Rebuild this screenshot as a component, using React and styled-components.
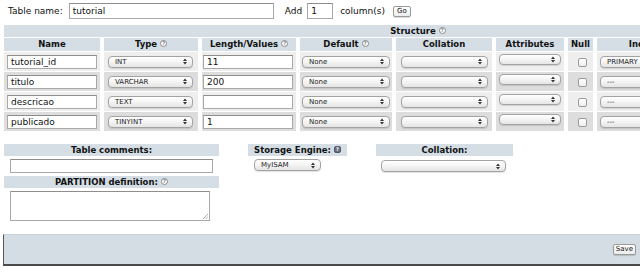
import React from "react";
import styled, { createGlobalStyle } from "styled-components";

const Global = createGlobalStyle`
  html, body { margin: 0; padding: 0; overflow: hidden; background: #fff; }
  body { font-family: "DejaVu Sans", Verdana, sans-serif; color: #111; width: 640px; }
`;

const Page = styled.div`
  width: 640px;
  height: 279px;
  overflow: hidden;
  position: relative;
`;

const TopBar = styled.div`
  display: flex;
  align-items: center;
  height: 24px;
  padding: 0 0 0 8px;
  font-size: 9px;
  box-sizing: border-box;
  padding-bottom: 2px;
`;

const Label = styled.span`
  margin-right: ${p => p.$mr || 0}px;
  margin-left: ${p => p.$ml || 0}px;
  white-space: nowrap;
`;

const TextInput = styled.div`
  width: ${p => p.$w}px;
  height: ${p => p.$h || 14}px;
  box-sizing: border-box;
  border: 1px solid #a9a9a9;
  border-top-color: #8e8e8e;
  background: #fff;
  font-size: 9px;
  line-height: ${p => (p.$h || 14) - 2}px;
  padding-left: 3px;
  margin-left: ${p => p.$ml || 0}px;
  white-space: nowrap;
  overflow: hidden;
`;

const Button = styled.div`
  height: ${p => p.$h || 11}px;
  padding: 0 ${p => p.$px || 3}px;
  box-sizing: border-box;
  border: 1px solid #9a9a9a;
  border-radius: 2px;
  background: linear-gradient(#ffffff, #ececec);
  font-size: 7px;
  line-height: ${p => (p.$h || 11) - 2}px;
  margin-left: ${p => p.$ml || 0}px;
  box-shadow: 0 1px 1px rgba(0,0,0,0.15);
`;

const Table = styled.table`
  border-collapse: separate;
  border-spacing: 4px 1px;
  table-layout: fixed;
  width: max-content;
  margin-left: 0;
`;

const Band = styled.th`
  background: #d5dee5;
  height: 12px;
  padding: 0;
  font-size: 8.5px;
  font-weight: bold;
  text-align: center;
  line-height: 12px;
`;

const HeadCell = styled.th`
  background: #d5dee5;
  width: ${p => p.$w}px;
  height: 13px;
  padding: 0;
  font-size: 8.5px;
  font-weight: bold;
  text-align: center;
  white-space: nowrap;
  overflow: hidden;
  line-height: 13px;
`;

const Row = styled.tr`
  background: ${p => (p.$alt ? "#dddddd" : "#eeeeee")};
`;

const Cell = styled.td`
  height: 19px;
  padding: 0 0 0 ${p => p.$pl || 3}px;
  vertical-align: middle;
  background: inherit;
  text-align: ${p => (p.$center ? "center" : "left")};
`;

const SelectBox = styled.div`
  display: flex;
  align-items: center;
  justify-content: space-between;
  width: ${p => p.$w}px;
  height: ${p => p.$h || 12}px;
  box-sizing: border-box;
  border: 1px solid #a3a3a3;
  border-radius: 4px;
  background: linear-gradient(#ffffff 0%, #f4f4f4 50%, #e4e4e4 100%);
  box-shadow: 0 1px 1px rgba(0,0,0,0.12);
  padding: 0 5px 0 6px;
  font-size: 7px;
  color: #222;
  margin-left: ${p => p.$ml || 0}px;
  margin-top: ${p => p.$mt || 0}px;
  white-space: nowrap;
  overflow: hidden;
`;

const Check = styled.span`
  display: inline-block;
  width: 9px;
  height: 9px;
  box-sizing: border-box;
  border: 1px solid #9b9b9b;
  border-radius: 2px;
  background: linear-gradient(#fff, #eee);
  vertical-align: middle;
`;

const Help = styled.span`
  display: inline-block;
  width: 7px;
  height: 7px;
  box-sizing: border-box;
  border-radius: ${p => (p.$dark ? "2px" : "50%")};
  border: 1px solid ${p => (p.$dark ? "#556" : "#888")};
  background: ${p => (p.$dark ? "#6a6f80" : "#fff")};
  color: ${p => (p.$dark ? "#fff" : "#777")};
  font-size: 5px;
  line-height: 5px;
  text-align: center;
  font-weight: bold;
  vertical-align: middle;
  margin-left: 3px;
  position: relative;
  top: -1px;
`;

const Bottom = styled.div`
  display: flex;
  align-items: flex-start;
  margin-top: 12px;
  padding-left: 4px;
`;

const Group = styled.div`
  display: flex;
  flex-direction: column;
  width: ${p => p.$w}px;
  margin-right: ${p => p.$mr || 0}px;
`;

const GroupHead = styled.div`
  background: #d5dee5;
  height: 12px;
  line-height: 12px;
  font-size: 8.5px;
  font-weight: bold;
  text-align: center;
  white-space: nowrap;
  margin-top: ${p => p.$mt || 0}px;
`;

const TextArea = styled.div`
  width: 200px;
  height: 30px;
  box-sizing: border-box;
  border: 1px solid #a9a9a9;
  border-top-color: #8e8e8e;
  margin: 3px 0 0 6px;
  position: relative;
  background: #fff;
`;

const Grip = styled.svg`
  position: absolute;
  right: 1px;
  bottom: 1px;
`;

const Footer = styled.div`
  margin: 13px 0 0 3px;
  height: 32px;
  box-sizing: border-box;
  background: #d3dde3;
  border-left: 1px solid #555;
  border-bottom: 2px solid #4a4a4a;
  border-top: 1px solid #c9d2d8;
  display: flex;
  align-items: center;
  justify-content: flex-end;
  padding-right: 4px;
`;

const Arrows = () => (
  <svg width="4" height="7" viewBox="0 0 4 7">
    <path d="M0 3 L2 0.5 L4 3 Z M0 4 L2 6.5 L4 4 Z" fill="#333" />
  </svg>
);

const Sel = ({ w, h, text, ml, mt }) => (
  <SelectBox $w={w} $h={h} $ml={ml} $mt={mt}>
    <span>{text}</span>
    <Arrows />
  </SelectBox>
);

const rows = [
  { name: "tutorial_id", type: "INT", len: "11", idx: "PRIMARY" },
  { name: "titulo", type: "VARCHAR", len: "200", idx: "---" },
  { name: "descricao", type: "TEXT", len: "", idx: "---" },
  { name: "publicado", type: "TINYINT", len: "1", idx: "---" },
];

export default function App() {
  return (
    <Page>
      <Global />
      <TopBar>
        <Label $mr={6}>Table name:</Label>
        <TextInput $w={205} $h={16}>tutorial</TextInput>
        <Label $ml={11} $mr={5}>Add</Label>
        <TextInput $w={26} $h={16}>1</TextInput>
        <Label $ml={7}>column(s)</Label>
        <Button $ml={8} $px={3}>Go</Button>
      </TopBar>
      <Table>
        <thead>
          <tr>
            <Band colSpan={11}>
              Structure<Help>?</Help>
            </Band>
          </tr>
          <tr>
            <HeadCell $w={96}>Name</HeadCell>
            <HeadCell $w={94}>Type<Help>?</Help></HeadCell>
            <HeadCell $w={94}>Length/Values<Help>?</Help></HeadCell>
            <HeadCell $w={92}>Default<Help>?</Help></HeadCell>
            <HeadCell $w={96}>Collation</HeadCell>
            <HeadCell $w={68}>Attributes</HeadCell>
            <HeadCell $w={25}>Null</HeadCell>
            <HeadCell $w={90}>Index</HeadCell>
            <HeadCell $w={30}>A_I</HeadCell>
            <HeadCell $w={100}>Comments</HeadCell>
            <HeadCell $w={1}></HeadCell>
          </tr>
        </thead>
        <tbody>
          {rows.map((r, i) => (
            <Row key={r.name} $alt={i % 2 === 1}>
              <Cell><TextInput $w={90}>{r.name}</TextInput></Cell>
              <Cell $pl={4}><Sel w={85} text={r.type} /></Cell>
              <Cell $pl={1}><TextInput $w={90}>{r.len}</TextInput></Cell>
              <Cell $pl={2}><Sel w={88} text="None" /></Cell>
              <Cell $pl={5}><Sel w={87} text="" /></Cell>
              <Cell $pl={3}><Sel w={62} h={11} mt={-4} text="" /></Cell>
              <Cell $center $pl={0}><Check /></Cell>
              <Cell $pl={3}><Sel w={80} text={r.idx} /></Cell>
              <Cell $center $pl={0}><Check /></Cell>
              <Cell><TextInput $w={90}></TextInput></Cell>
              <Cell></Cell>
            </Row>
          ))}
        </tbody>
      </Table>
      <Bottom>
        <Group $w={215} $mr={29}>
          <GroupHead>Table comments:</GroupHead>
          <TextInput $w={203} $ml={6} style={{ marginTop: 3 }} />
          <GroupHead $mt={3}>PARTITION definition:<Help>?</Help></GroupHead>
          <TextArea>
            <Grip width="6" height="6" viewBox="0 0 6 6">
              <path d="M1 6 L6 1 M3.5 6 L6 3.5" stroke="#999" strokeWidth="0.8" />
            </Grip>
          </TextArea>
        </Group>
        <Group $w={99} $mr={29}>
          <GroupHead>Storage Engine:<Help $dark>?</Help></GroupHead>
          <Sel w={67} h={12} ml={6} mt={3} text="MyISAM" />
        </Group>
        <Group $w={137}>
          <GroupHead>Collation:</GroupHead>
          <Sel w={125} h={12} ml={5} mt={4} text="" />
        </Group>
      </Bottom>
      <Footer>
        <Button $h={11} $px={2}>Save</Button>
      </Footer>
    </Page>
  );
}
